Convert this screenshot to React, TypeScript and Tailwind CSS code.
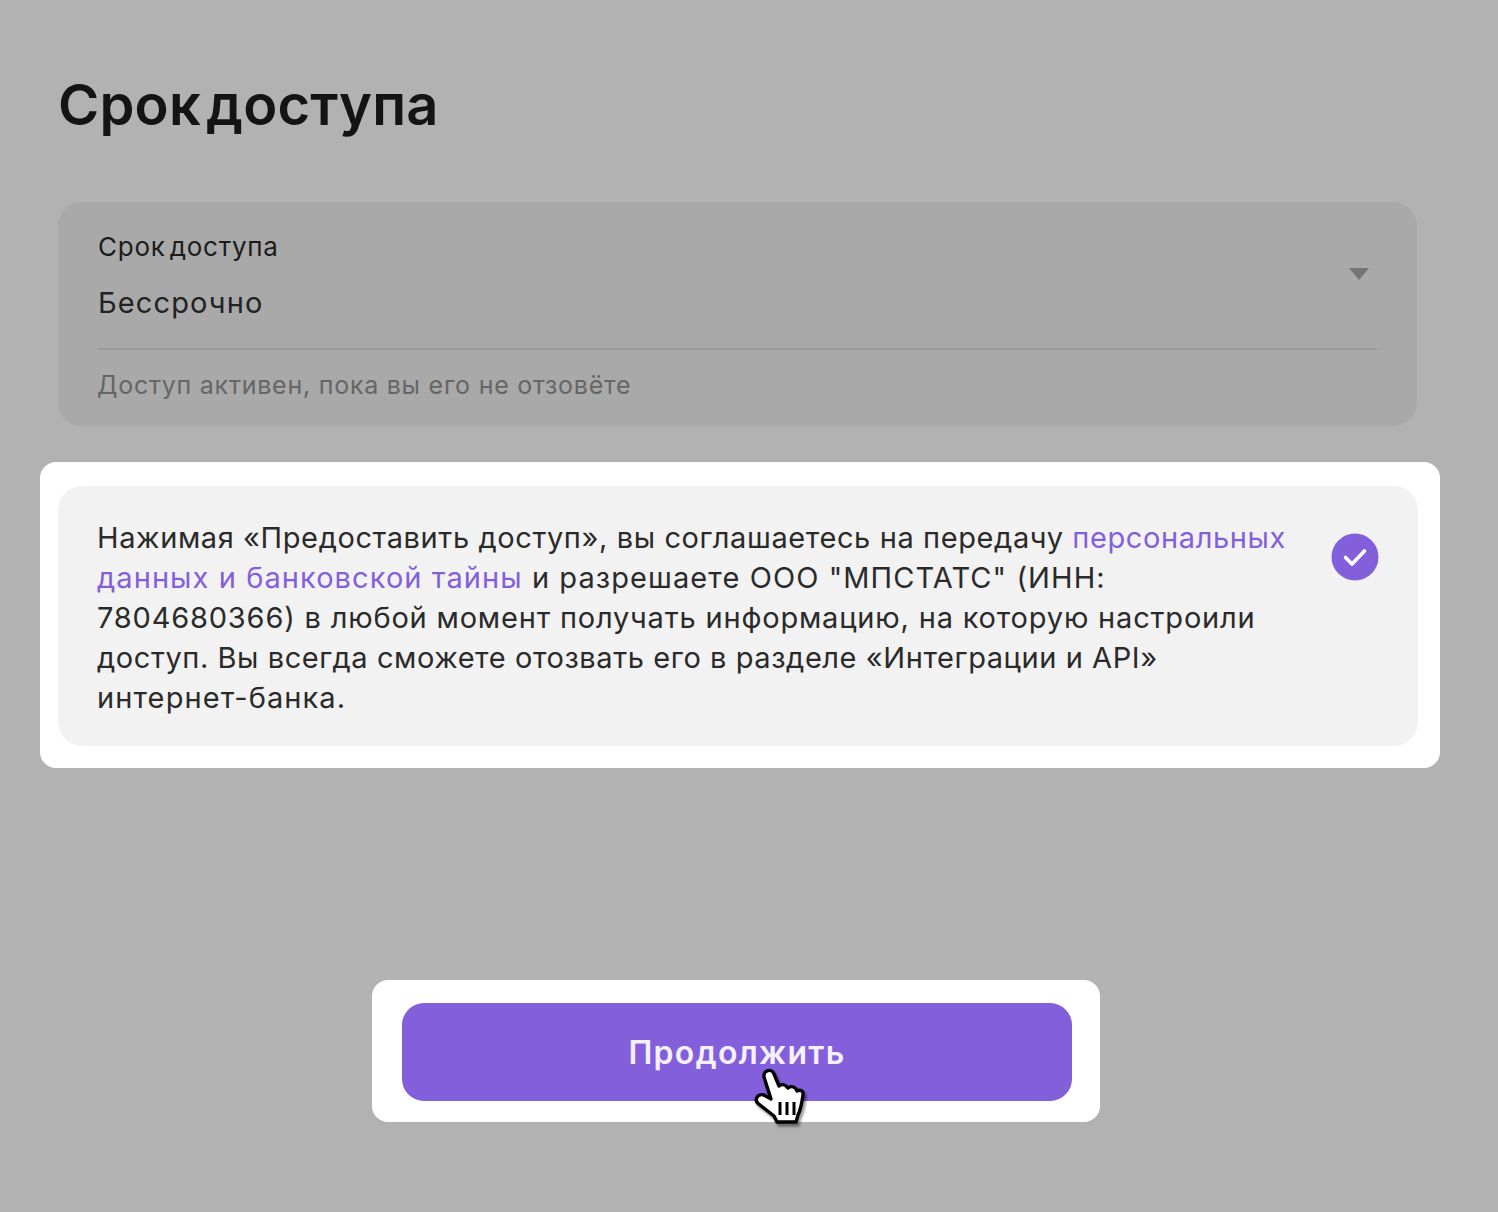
import React from 'react';

const FONT = "font-['Inter','Noto_Sans',sans-serif]";

function HandCursor() {
  return (
    <svg className="absolute left-[752px] top-[1068px] drop-shadow-[2px_3px_1px_rgba(0,0,0,0.4)]" width="56" height="60" viewBox="0 0 56 60">
      <path
        d="M12 9c-1-7 8-9 10-3l5 12c2-2 6-2 8 1l1 1c2-2 6-2 8 1l1 2c3-2 7 0 6 4-1 7-2 14-5 20l-2 7H25l-3-6L8 37c-7-4-3-12 4-10l7 4z"
        fill="#fff"
        stroke="#000"
        strokeWidth="3.4"
        strokeLinejoin="round"
      />
      <path d="M28 34v13M35 34v13M42 34v13" stroke="#000" strokeWidth="3" fill="none" />
    </svg>
  );
}

export default function App() {
  return (
    <div className={`${FONT} relative h-[1212px] w-[1498px] overflow-hidden bg-[#b2b2b2] pt-[72px]`}>
      <h1 className="ml-[58px] text-[56px] leading-[66px] font-semibold tracking-[0.2px] [word-spacing:-9px] text-[#141414]">Срок доступа</h1>

      <div className="ml-[58px] mt-[64px] h-[224px] w-[1359px] rounded-[24px] bg-[#a9a9a9] px-[40px] pt-[30px]">
        <div className="relative border-b-2 border-[#9b9b9b] h-[118px]">
          <p className="text-[26px] leading-[30px] tracking-[0.75px] [word-spacing:-4px] text-[#1c1c1c]">Срок доступа</p>
          <p className="mt-[21px] text-[29px] leading-[40px] tracking-[1.1px] text-[#222]">Бессрочно</p>
          <span className="absolute right-[8px] top-[36px] h-0 w-0 border-x-[10px] border-t-[12px] border-x-transparent border-t-[#757575]" />
        </div>
        <p className="mt-[19px] -ml-[1px] text-[25px] leading-[32px] tracking-[0.75px] text-[#666]">Доступ активен, пока вы его не отзовёте</p>
      </div>

      <div className="ml-[40px] mt-[36px] h-[306px] w-[1400px] rounded-[16px] bg-white pl-[18px] pt-[24px]">
        <div className="flex h-[260px] w-[1360px] rounded-[24px] bg-[#f2f2f2] pl-[39px] pr-[39px] pt-[32px]">
          <div className="w-[1195px] text-[29px] leading-[40px] tracking-[0.6px] text-[#2a2a2a]">
            <p>Нажимая «Предоставить доступ», вы соглашаетесь на передачу <span className="text-[#835fdc]">персональных</span></p>
            <p className="tracking-[1.08px]"><span className="text-[#835fdc]">данных и банковской тайны</span> и разрешаете ООО "МПСТАТС" (ИНН:</p>
            <p className="tracking-[0.81px]">7804680366) в любой момент получать информацию, на которую настроили</p>
            <p className="tracking-[0.57px]">доступ. Вы всегда сможете отозвать его в разделе «Интеграции и API»</p>
            <p className="tracking-[1.1px]">интернет-банка.</p>
          </div>
          <svg className="ml-auto mt-[15px] shrink-0" width="48" height="48" viewBox="0 0 48 48">
            <circle cx="24" cy="24" r="23.5" fill="#835fdc" />
            <path d="M14.5 24.5l6.5 6.5L33.5 18" fill="none" stroke="#fff" strokeWidth="3.6" strokeLinecap="round" strokeLinejoin="round" />
          </svg>
        </div>
      </div>

      <div className="ml-[372px] mt-[212px] flex h-[142px] w-[728px] rounded-[16px] bg-white pl-[30px] pt-[23px]">
        <button type="button" className="h-[98px] w-[670px] rounded-[22px] bg-[#835fdc] pt-[2px] text-[32px] font-semibold tracking-[1.3px] text-[#f4f0fd]">
          Продолжить
        </button>
      </div>

      <HandCursor />
    </div>
  );
}
